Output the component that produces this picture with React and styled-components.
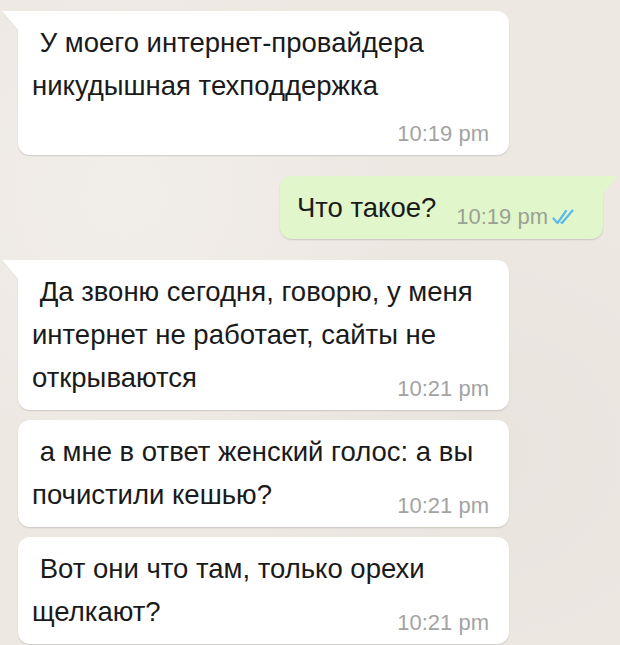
import styled, { createGlobalStyle, css } from "styled-components";

const GlobalStyle = createGlobalStyle`
  html, body {
    margin: 0;
    padding: 0;
    background: #ede8e2;
  }
  body {
    font-family: "Liberation Sans", Arial, sans-serif;
  }
`;

const Chat = styled.div`
  display: flex;
  flex-direction: column;
  align-items: flex-start;
  width: 620px;
  height: 645px;
  box-sizing: border-box;
  padding: 11px 17px 0 18px;
  overflow: hidden;
  background:
    radial-gradient(circle at 20% 30%, rgba(255, 255, 255, 0.25), transparent 40%),
    radial-gradient(circle at 80% 70%, rgba(0, 0, 0, 0.02), transparent 40%),
    #ede8e2;
`;

const Bubble = styled.div`
  position: relative;
  box-sizing: border-box;
  margin-top: ${(p) => (p.$first ? "0" : p.$gap)};
  padding: 10px 20px 11px 14px;
  border-radius: 12px;
  background: ${(p) => (p.$out ? "#e1f7cb" : "#ffffff")};
  box-shadow: 0 1px 1.5px rgba(0, 0, 0, 0.14);
  color: #1a1a1a;

  ${(p) =>
    p.$out
      ? css`
          align-self: flex-end;
          display: flex;
          align-items: flex-end;
          padding: 10px 29px 10px 17px;
        `
      : css`
          width: 491px;
        `}

  ${(p) =>
    p.$tail &&
    !p.$out &&
    css`
      border-top-left-radius: 0;
      &::before {
        content: "";
        position: absolute;
        top: 0;
        left: -16px;
        border-top: 19px solid #ffffff;
        border-left: 16px solid transparent;
        filter: drop-shadow(0 1px 0 rgba(0, 0, 0, 0.06));
      }
    `}

  ${(p) =>
    p.$tail &&
    p.$out &&
    css`
      border-top-right-radius: 0;
      &::after {
        content: "";
        position: absolute;
        top: 0;
        right: -14px;
        border-top: 18px solid #e1f7cb;
        border-right: 14px solid transparent;
      }
    `}
`;

const Text = styled.div`
  font-size: 27.5px;
  line-height: 43px;
  white-space: nowrap;
`;

const Meta = styled.div`
  display: flex;
  align-items: center;
  justify-content: flex-end;
  gap: 4px;
  height: 20px;
  font-size: 22px;
  line-height: 20px;
  color: #a3a3a3;
  white-space: nowrap;
  margin-top: ${(p) => (p.$ownLine ? "17px" : "-20px")};

  ${(p) =>
    p.$inline &&
    css`
      margin-top: 0;
      margin-left: 20px;
      margin-bottom: 2px;
      color: #9aa294;
    `}
`;

const Ticks = () => (
  <svg width="22" height="16" viewBox="0 0 22 16" fill="none">
    <path
      d="M1.5 9.5 L5.5 14 L14 2"
      stroke="#5bb8e8"
      strokeWidth="2.2"
      strokeLinecap="round"
      strokeLinejoin="round"
    />
    <path
      d="M9.5 13.5 L10 14 L20.5 1.5"
      stroke="#5bb8e8"
      strokeWidth="2.2"
      strokeLinecap="round"
      strokeLinejoin="round"
    />
  </svg>
);

const messages = [
  {
    lines: ["\u00a0У моего интернет-провайдера", "никудышная техподдержка"],
    time: "10:19 pm",
    tail: true,
    ownLine: true,
  },
  { lines: ["Что такое?"], time: "10:19 pm", out: true, tail: true },
  {
    lines: [
      "\u00a0Да звоню сегодня, говорю, у меня",
      "интернет не работает, сайты не",
      "открываются",
    ],
    time: "10:21 pm",
    tail: true,
  },
  {
    lines: ["\u00a0а мне в ответ женский голос: а вы", "почистили кешью?"],
    time: "10:21 pm",
  },
  {
    lines: ["\u00a0Вот они что там, только орехи", "щелкают?"],
    time: "10:21 pm",
  },
];

function Message({ msg, first }) {
  const gap = msg.tail ? "21px" : "10px";
  const text = (
    <Text>
      {msg.lines.map((l, i) => (
        <span key={i}>
          {i > 0 && <br />}
          {l}
        </span>
      ))}
    </Text>
  );

  if (msg.out) {
    return (
      <Bubble $out $tail={msg.tail} $gap={gap} $first={first}>
        {text}
        <Meta $inline>
          {msg.time}
          <Ticks />
        </Meta>
      </Bubble>
    );
  }

  return (
    <Bubble $tail={msg.tail} $gap={gap} $first={first}>
      {text}
      <Meta $ownLine={msg.ownLine}>{msg.time}</Meta>
    </Bubble>
  );
}

export default function App() {
  return (
    <>
      <GlobalStyle />
      <Chat>
        {messages.map((m, i) => (
          <Message key={i} msg={m} first={i === 0} />
        ))}
      </Chat>
    </>
  );
}
